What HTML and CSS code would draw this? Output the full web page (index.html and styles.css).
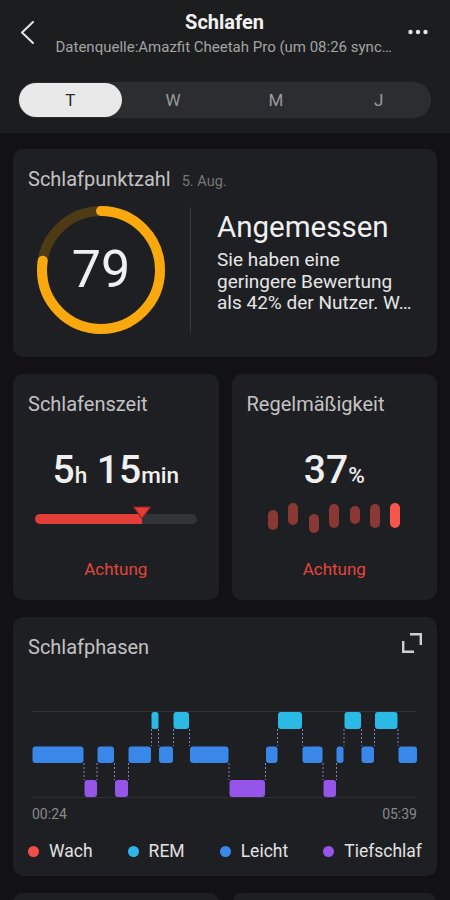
FILE: index.html
```html
<!DOCTYPE html>
<html lang="de">
<head>
    <meta charset="UTF-8">
    <meta name="viewport" content="width=device-width, initial-scale=1.0">
    <title>Schlafen</title>
    <link rel="stylesheet" href="styles.css">
</head>
<body>
    <header class="topbar">
        <div class="nav">
            <svg class="back" width="16" height="24" viewBox="0 0 16 24">
                <path d="M14 1 L3 11.5 L14 22" fill="none" stroke="#e6e6e6" stroke-width="2" stroke-linecap="round" stroke-linejoin="round"/>
            </svg>
            <div class="heading">
                <div class="title">Schlafen</div>
                <div class="subtitle">Datenquelle:Amazfit Cheetah Pro (um 08:26 synchronisiert)</div>
            </div>
            <svg class="more" width="20" height="6" viewBox="0 0 20 6">
                <circle cx="2.5" cy="3" r="2.2" fill="#e6e6e6"/>
                <circle cx="10" cy="3" r="2.2" fill="#e6e6e6"/>
                <circle cx="17.5" cy="3" r="2.2" fill="#e6e6e6"/>
            </svg>
        </div>

        <div class="tabs">
            <div class="tab active">T</div>
            <div class="tab">W</div>
            <div class="tab">M</div>
            <div class="tab">J</div>
        </div>
    </header>

    <main class="content">
        <section class="card score">
            <div class="card-title">Schlafpunktzahl <span class="date">5. Aug.</span></div>
            <div class="score-body">
                <div class="ring">
                    <svg width="128" height="128" viewBox="0 0 128 128">
                        <circle cx="64" cy="64" r="59" fill="none" stroke="#4e3b16" stroke-width="10"/>
                        <circle cx="64" cy="64" r="59" fill="none" stroke="#f9a80e" stroke-width="10"
                                stroke-linecap="round" stroke-dasharray="287 400"
                                transform="rotate(-90 64 64)"/>
                    </svg>
                    <span class="ring-value">79</span>
                </div>
                <div class="divider"></div>
                <div class="verdict">
                    <h2>Angemessen</h2>
                    <p>Sie haben eine<br>geringere Bewertung<br>als 42% der Nutzer. W…</p>
                </div>
            </div>
        </section>

        <div class="pair">
            <section class="card stat">
                <div class="card-title">Schlafenszeit</div>
                <div class="stat-value">5<small>h</small> 15<small>min</small></div>
                <div class="meter">
                    <div class="bar">
                        <div class="bar-fill" style="width: 66%"></div>
                        <svg class="marker" style="left: calc(66% - 10px)" width="20" height="14" viewBox="0 0 20 14">
                            <polygon points="1.5,1 18.5,1 10,12.5" fill="#e53d35" stroke="#8a2420" stroke-width="1.2" stroke-linejoin="round"/>
                        </svg>
                    </div>
                </div>
                <div class="stat-status">Achtung</div>
            </section>

            <section class="card stat">
                <div class="card-title">Regelmäßigkeit</div>
                <div class="stat-value">37<small>%</small></div>
                <div class="meter pills">
                    <span class="pill" style="margin-top: 7px; height: 20px"></span>
                    <span class="pill" style="margin-top: 0; height: 22px"></span>
                    <span class="pill" style="margin-top: 11px; height: 19px"></span>
                    <span class="pill" style="margin-top: 1px; height: 24px"></span>
                    <span class="pill" style="margin-top: 3px; height: 18px"></span>
                    <span class="pill" style="margin-top: 1px; height: 24px"></span>
                    <span class="pill today" style="margin-top: 0; height: 25px"></span>
                </div>
                <div class="stat-status">Achtung</div>
            </section>
        </div>

        <section class="card phases">
            <div class="phases-head">
                <div class="card-title">Schlafphasen</div>
                <svg class="expand" width="20" height="20" viewBox="0 0 20 20">
                    <path d="M8 1.2 H18.8 V12 M1.2 8 V18.8 H12" fill="none" stroke="#d0d0d0" stroke-width="2.4"/>
                </svg>
            </div>

            <svg class="chart" width="385" height="100" viewBox="0 0 385 100">
                <line x1="0" y1="10.5" x2="385" y2="10.5" stroke="#2f3033" stroke-width="1"/>
                <line x1="0" y1="96.5" x2="385" y2="96.5" stroke="#2f3033" stroke-width="1"/>

                <g stroke="#a39ae8" stroke-width="1" stroke-dasharray="2 2" opacity="0.8">
                    <line x1="52" y1="62" x2="52" y2="79"/>
                    <line x1="65" y1="62" x2="65" y2="79"/>
                    <line x1="82.5" y1="62" x2="82.5" y2="79"/>
                    <line x1="96.5" y1="62" x2="96.5" y2="79"/>
                    <line x1="119.5" y1="28" x2="119.5" y2="45"/>
                    <line x1="126.5" y1="28" x2="126.5" y2="45"/>
                    <line x1="141.5" y1="28" x2="141.5" y2="45"/>
                    <line x1="157.5" y1="28" x2="157.5" y2="45"/>
                    <line x1="197" y1="62" x2="197" y2="79"/>
                    <line x1="233.5" y1="62" x2="233.5" y2="79"/>
                    <line x1="245.5" y1="28" x2="245.5" y2="45"/>
                    <line x1="270.5" y1="28" x2="270.5" y2="45"/>
                    <line x1="291" y1="62" x2="291" y2="79"/>
                    <line x1="304.5" y1="62" x2="304.5" y2="79"/>
                    <line x1="312" y1="28" x2="312" y2="45"/>
                    <line x1="329.5" y1="28" x2="329.5" y2="45"/>
                    <line x1="342.5" y1="28" x2="342.5" y2="45"/>
                    <line x1="366" y1="28" x2="366" y2="45"/>
                </g>

                <g fill="#3a87ea">
                    <rect x="0.5" y="45.5" width="51" height="16.5" rx="3"/>
                    <rect x="65.5" y="45.5" width="16.5" height="16.5" rx="3"/>
                    <rect x="96.5" y="45.5" width="22.5" height="16.5" rx="3"/>
                    <rect x="127" y="45.5" width="14" height="16.5" rx="3"/>
                    <rect x="158" y="45.5" width="38.5" height="16.5" rx="3"/>
                    <rect x="234" y="45.5" width="11.5" height="16.5" rx="3"/>
                    <rect x="270.5" y="45.5" width="20" height="16.5" rx="3"/>
                    <rect x="304.5" y="45.5" width="7" height="16.5" rx="3"/>
                    <rect x="329.5" y="45.5" width="12.5" height="16.5" rx="3"/>
                    <rect x="366.5" y="45.5" width="18.5" height="16.5" rx="3"/>
                </g>
                <g fill="#2bb9e6">
                    <rect x="119.5" y="11" width="7" height="17" rx="2.5"/>
                    <rect x="141.5" y="11" width="15.5" height="17" rx="3"/>
                    <rect x="246" y="11" width="24" height="17" rx="3"/>
                    <rect x="312.5" y="11" width="16.5" height="17" rx="3"/>
                    <rect x="343" y="11" width="22.5" height="17" rx="3"/>
                </g>
                <g fill="#9455e8">
                    <rect x="52.5" y="79" width="12.5" height="17" rx="3"/>
                    <rect x="83" y="79" width="13" height="17" rx="3"/>
                    <rect x="197.5" y="79" width="35.5" height="17" rx="3"/>
                    <rect x="291.5" y="79" width="12.5" height="17" rx="3"/>
                </g>
            </svg>

            <div class="axis">
                <span>00:24</span>
                <span>05:39</span>
            </div>

            <div class="legend">
                <div class="legend-item"><span class="dot awake"></span>Wach</div>
                <div class="legend-item"><span class="dot rem"></span>REM</div>
                <div class="legend-item"><span class="dot light"></span>Leicht</div>
                <div class="legend-item"><span class="dot deep"></span>Tiefschlaf</div>
            </div>
        </section>

        <div class="pair">
            <section class="card stat">
                <div class="card-title">Tiefschlaf</div>
            </section>
            <section class="card stat">
                <div class="card-title">Atmung</div>
            </section>
        </div>
    </main>
</body>
</html>
```

FILE: styles.css
```css
body {
    margin: 0;
    background-color: #121214;
    font-family: Roboto, "Noto Sans", sans-serif;
    color: #eeeeee;
}

/* header */
.topbar {
    background-color: #1c1d1f;
    padding: 10px 19px 15px 18px;
}

.nav {
    display: grid;
    grid-template-columns: 36px 1fr 36px;
}

.back {
    margin-top: 11px;
    margin-left: 1px;
}

.more {
    justify-self: end;
    margin-top: 19px;
    margin-right: 3px;
}

.heading {
    text-align: center;
    min-width: 0;
}

.title {
    font-size: 20px;
    line-height: 24px;
    font-weight: bold;
    color: #f2f2f2;
}

.subtitle {
    margin: 3px auto 0;
    max-width: 338px;
    font-size: 15px;
    line-height: 20px;
    color: #a3a3a3;
    white-space: nowrap;
    overflow: hidden;
    text-overflow: ellipsis;
}

.tabs {
    margin-top: 25px;
    display: grid;
    grid-template-columns: repeat(4, 1fr);
    height: 36px;
    padding: 1px;
    box-sizing: border-box;
    background-color: #2c2d30;
    border-radius: 18px;
}

.tab {
    display: flex;
    align-items: center;
    justify-content: center;
    font-size: 17px;
    color: #9a9a9a;
    border-radius: 17px;
}

.tab.active {
    background-color: #e9e9e9;
    color: #2b2b2b;
}

/* cards */
.content {
    padding: 16px 13px;
    display: flex;
    flex-direction: column;
    gap: 17px;
}

.card {
    background-color: #1e1f22;
    border-radius: 10px;
    padding: 18px 15px;
}

.card-title {
    font-size: 20px;
    line-height: 24px;
    color: #c3c3c3;
}

.date {
    margin-left: 6px;
    font-size: 14.5px;
    line-height: 1;
    color: #777777;
}

.score {
    padding-bottom: 23px;
}

.score-body {
    display: flex;
    margin-top: 15px;
}

.ring {
    display: grid;
    margin-left: 9px;
    width: 128px;
    height: 128px;
}

.ring svg,
.ring-value {
    grid-area: 1 / 1;
}

.ring-value {
    align-self: center;
    justify-self: center;
    font-size: 52px;
    line-height: 60px;
    color: #f0f0f0;
}

.divider {
    width: 1px;
    height: 126px;
    margin: 1px 0 0 25px;
    background-color: #38393c;
}

.verdict {
    margin: 4px 0 0 26px;
}

.verdict h2 {
    margin: 0;
    font-size: 29.5px;
    line-height: 34px;
    font-weight: normal;
    color: #f0f0f0;
}

.verdict p {
    margin: 5px 0 0;
    font-size: 19px;
    line-height: 21.5px;
    color: #e6e6e6;
}

.pair {
    display: grid;
    grid-template-columns: 1fr 1fr;
    gap: 13px;
}

.stat {
    display: flex;
    flex-direction: column;
    align-items: center;
    padding-bottom: 20px;
}

.stat .card-title {
    align-self: stretch;
}

.stat-value {
    margin-top: 32px;
    font-size: 39px;
    line-height: 44px;
    font-weight: 500;
    color: #f0f0f0;
}

.stat-value small {
    font-size: 22.5px;
    line-height: 1;
    font-weight: 500;
}

.meter {
    margin-top: 11px;
    width: 162px;
    height: 32px;
}

.bar {
    position: relative;
    margin-top: 11px;
    height: 10px;
    border-radius: 5px;
    background-color: #333437;
}

.bar-fill {
    height: 100%;
    border-radius: 5px 0 0 5px;
    background-color: #e23d36;
}

.marker {
    position: absolute;
    top: -8px;
}

.pills {
    display: flex;
    justify-content: center;
    align-items: flex-start;
    gap: 10.4px;
}

.pill {
    width: 10px;
    border-radius: 5px;
    background-color: #8a3833;
}

.pill.today {
    background-color: #f6564c;
}

.stat-status {
    margin-top: 23px;
    font-size: 17px;
    line-height: 22px;
    color: #e1453d;
}

/* sleep phases */
.phases {
    padding-bottom: 13px;
}

.phases-head {
    display: flex;
    justify-content: space-between;
    align-items: flex-start;
}

.expand {
    margin: -2px 0 0;
}

.chart {
    display: block;
    margin: 42px 0 0 4px;
}

.axis {
    display: flex;
    justify-content: space-between;
    width: 385px;
    margin: 4px 0 0 4px;
    font-size: 14px;
    line-height: 18px;
    color: #8a8a8a;
}

.legend {
    display: flex;
    justify-content: space-between;
    margin-top: 16px;
}

.legend-item {
    display: flex;
    align-items: center;
    gap: 10px;
    font-size: 17.5px;
    line-height: 24px;
    color: #e2e2e2;
}

.dot {
    width: 11px;
    height: 11px;
    border-radius: 50%;
}

.dot.awake { background-color: #f24c4c; }
.dot.rem { background-color: #2fb6e8; }
.dot.light { background-color: #3b87ea; }
.dot.deep { background-color: #9656e8; }
```
